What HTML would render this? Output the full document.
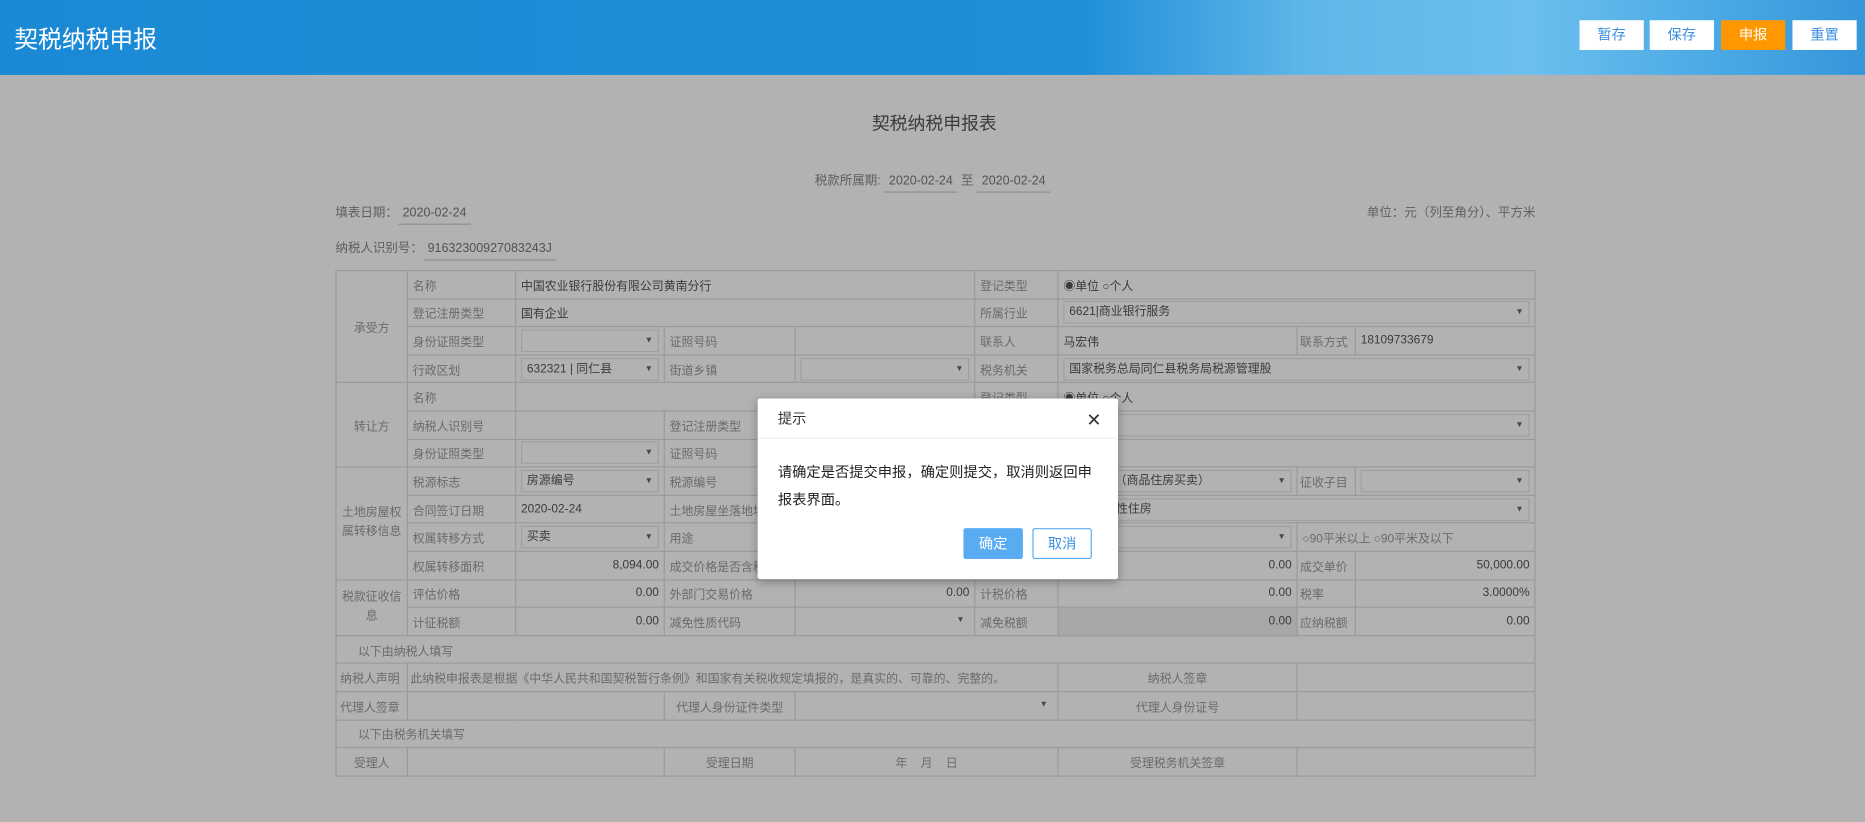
<!DOCTYPE html>
<html><head><meta charset="utf-8">
<style>
*{box-sizing:border-box;margin:0;padding:0}
html,body{width:1865px;height:821px;overflow:hidden;background:#b2b2b2}
#w{position:absolute;left:0;top:0;width:1568px;height:691px;transform:scale(1.18941);transform-origin:0 0;background:#fff;font-family:"Liberation Sans","Noto Sans CJK SC",sans-serif;color:#555;font-size:10.5px}
#hd{position:absolute;left:0;top:0;width:1568px;height:63px;background:linear-gradient(90deg,#1b8ad6 0%,#1f8fd9 58%,#5fb6e8 70%,#6cbfee 82%,#4aa9e4 92%,#3596da 100%);overflow:hidden}
#hd .t{position:absolute;left:12px;top:17px;color:#fff;font-size:20px}
.btn{position:absolute;top:17px;width:54px;height:25px;background:#fff;color:#3d8fe0;text-align:center;line-height:25px;font-size:12px}
#ov{position:absolute;left:0;top:63px;width:1568px;height:628px;background:rgba(0,0,0,.3)}
.ab{position:absolute;white-space:nowrap}
.u{border-bottom:1px solid #ccc;padding:0 4px 3px;color:#777}
table{position:absolute;left:282px;top:227px;border-collapse:collapse;table-layout:fixed;width:1008px}
td{border:1px solid #ddd;height:23.6px;padding:0 4px;color:#999;white-space:nowrap;overflow:hidden;font-size:10px}
td.v{color:#555}
td.c{text-align:center}
td.r{text-align:right}
.sel{display:block;border:1px solid #e4e4e4;height:19px;line-height:17px;padding:0 4px;position:relative;color:#555}
.sel:after{content:"▼";position:absolute;right:4px;top:0;font-size:7px;color:#666}
.g{background:#f0f0f0}
#dlg{position:absolute;left:637px;top:335px;width:303px;height:152px;background:#fff;box-shadow:0 2px 8px rgba(0,0,0,.3);border-radius:2px}
#dlg .h{height:34px;border-bottom:1px solid #eee;line-height:34px;padding-left:17px;font-size:12px;color:#333}
#dlg .x{position:absolute;right:14px;top:9px;font-size:15px;color:#333}
#dlg .b{position:absolute;left:17px;top:51px;font-size:12px;line-height:23px;color:#222;width:275px}
.db{position:absolute;top:109px;width:50px;height:26px;line-height:24px;text-align:center;font-size:12px;border-radius:2px}
</style></head><body>
<div id="w">
<div id="hd">
<div class="t">契税纳税申报</div>
<div class="btn" style="left:1328px">暂存</div>
<div class="btn" style="left:1387px">保存</div>
<div class="btn" style="left:1447px;background:#ff9800;color:#fff">申报</div>
<div class="btn" style="left:1507px">重置</div>
</div>

<div class="ab" style="left:733px;top:93px;font-size:15px;color:#555">契税纳税申报表</div>
<div class="ab" style="left:685px;top:144px;color:#888">税款所属期: <span class="u">2020-02-24</span> 至 <span class="u">2020-02-24</span></div>
<div class="ab" style="left:282px;top:171px;color:#888">填表日期：<span class="u">2020-02-24</span></div>
<div class="ab" style="right:277px;top:171px;color:#888">单位：元（列至角分）、平方米</div>
<div class="ab" style="left:282px;top:201px;color:#888">纳税人识别号：<span class="u">91632300927083243J</span></div>

<table>
<colgroup><col style="width:60px"><col style="width:91px"><col style="width:125px"><col style="width:110px"><col style="width:151px"><col style="width:70px"><col style="width:201px"><col style="width:49px"><col style="width:151px"></colgroup>
<tr><td rowspan="4" class="c">承受方</td><td>名称</td><td colspan="3" class="v">中国农业银行股份有限公司黄南分行</td><td>登记类型</td><td colspan="3" class="v">◉单位 ○个人</td></tr>
<tr><td>登记注册类型</td><td colspan="3" class="v">国有企业</td><td>所属行业</td><td colspan="3"><span class="sel">6621|商业银行服务</span></td></tr>
<tr><td>身份证照类型</td><td><span class="sel"></span></td><td>证照号码</td><td></td><td>联系人</td><td class="v">马宏伟</td><td style="padding:0 2px">联系方式</td><td class="v">18109733679</td></tr>
<tr><td>行政区划</td><td><span class="sel">632321 | 同仁县</span></td><td>街道乡镇</td><td><span class="sel"></span></td><td>税务机关</td><td colspan="3"><span class="sel">国家税务总局同仁县税务局税源管理股</span></td></tr>
<tr><td rowspan="3" class="c">转让方</td><td>名称</td><td colspan="3"></td><td>登记类型</td><td colspan="3" class="v">◉单位 ○个人</td></tr>
<tr><td>纳税人识别号</td><td></td><td>登记注册类型</td><td></td><td>所属行业</td><td colspan="3"><span class="sel"></span></td></tr>
<tr><td>身份证照类型</td><td><span class="sel"></span></td><td>证照号码</td><td></td><td>联系人</td><td colspan="3"></td></tr>
<tr><td rowspan="4" class="c" style="white-space:normal;line-height:16px">土地房屋权属转移信息</td><td>税源标志</td><td><span class="sel">房源编号</span></td><td>税源编号</td><td></td><td>房屋类别</td><td><span class="sel">1|增量房（商品住房买卖）</span></td><td style="padding:0 2px">征收子目</td><td><span class="sel"></span></td></tr>
<tr><td>合同签订日期</td><td class="v">2020-02-24</td><td>土地房屋坐落地址</td><td></td><td>房屋用途</td><td colspan="3"><span class="sel">103|保障性住房</span></td></tr>
<tr><td>权属转移方式</td><td><span class="sel">买卖</span></td><td>用途</td><td></td><td>房屋面积</td><td><span class="sel"></span></td><td colspan="2">○90平米以上 ○90平米及以下</td></tr>
<tr><td>权属转移面积</td><td class="r v">8,094.00</td><td>成交价格是否含税</td><td></td><td>成交价格</td><td class="r v">0.00</td><td style="padding:0 2px">成交单价</td><td class="r v">50,000.00</td></tr>
<tr><td rowspan="2" class="c" style="white-space:normal;line-height:16px">税款征收信息</td><td>评估价格</td><td class="r v">0.00</td><td>外部门交易价格</td><td class="r v">0.00</td><td>计税价格</td><td class="r v">0.00</td><td style="padding:0 2px">税率</td><td class="r v">3.0000%</td></tr>
<tr><td>计征税额</td><td class="r v">0.00</td><td>减免性质代码</td><td><span class="sel" style="border:0"></span></td><td>减免税额</td><td class="r v g">0.00</td><td style="padding:0 2px">应纳税额</td><td class="r v">0.00</td></tr>
<tr><td colspan="9" style="padding-left:18px">以下由纳税人填写</td></tr>
<tr><td style="padding:0 3px">纳税人声明</td><td colspan="5" style="padding-left:2px">此纳税申报表是根据《中华人民共和国契税暂行条例》和国家有关税收规定填报的，是真实的、可靠的、完整的。</td><td class="c">纳税人签章</td><td colspan="2"></td></tr>
<tr><td style="padding:0 3px">代理人签章</td><td colspan="2"></td><td class="c">代理人身份证件类型</td><td colspan="2"><span class="sel" style="border:0"></span></td><td class="c">代理人身份证号</td><td colspan="2"></td></tr>
<tr><td colspan="9" style="padding-left:18px">以下由税务机关填写</td></tr>
<tr><td class="c">受理人</td><td colspan="2"></td><td class="c">受理日期</td><td colspan="2" class="c">年&nbsp;&nbsp;&nbsp;&nbsp;月&nbsp;&nbsp;&nbsp;&nbsp;日</td><td class="c">受理税务机关签章</td><td colspan="2"></td></tr>
</table>

<div id="ov"></div>
<div id="dlg">
<div class="h">提示</div>
<div class="x">✕</div>
<div class="b">请确定是否提交申报，确定则提交，取消则返回申报表界面。</div>
<div class="db" style="left:173px;background:#5aacf2;color:#fff;border:1px solid #5aacf2">确定</div>
<div class="db" style="left:231px;background:#fff;color:#3d8fe0;border:1px solid #5aacf2">取消</div>
</div>
</div>
</body></html>
